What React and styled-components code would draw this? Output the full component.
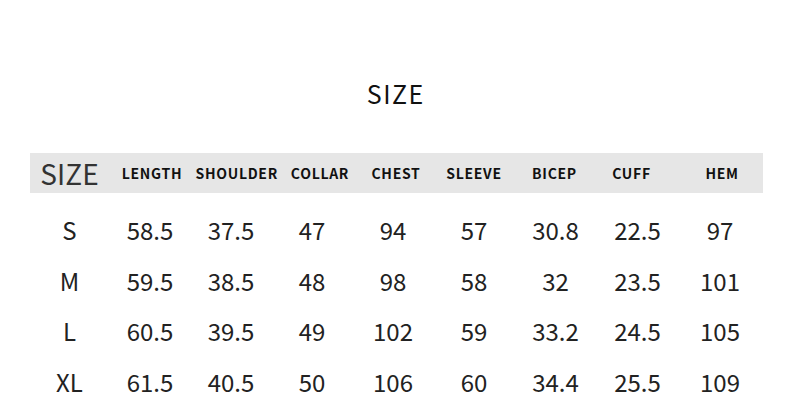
import React from 'react'
import styled, { createGlobalStyle } from 'styled-components'

const columns = ['LENGTH', 'SHOULDER', 'COLLAR', 'CHEST', 'SLEEVE', 'BICEP', 'CUFF', 'HEM']

// small nudges so header labels sit where the original artwork has them
const headShift = [2, 5, 8, 3, 0, -1, -6, 2]

const rows = [
  { size: 'S', values: ['58.5', '37.5', '47', '94', '57', '30.8', '22.5', '97'] },
  { size: 'M', values: ['59.5', '38.5', '48', '98', '58', '32', '23.5', '101'] },
  { size: 'L', values: ['60.5', '39.5', '49', '102', '59', '33.2', '24.5', '105'] },
  { size: 'XL', values: ['61.5', '40.5', '50', '106', '60', '34.4', '25.5', '109'] },
]

const App = () => {
  return (
    <>
      <GlobalStyle />
      <PAGE>
        <TITLE>SIZE</TITLE>
        <TABLE>
          <HEADER_ROW>
            <SIZE_HEAD>SIZE</SIZE_HEAD>
            {columns.map((col, index) => (
              <HEAD_CELL key={col} $shift={headShift[index]}>
                {col}
              </HEAD_CELL>
            ))}
          </HEADER_ROW>
          {rows.map((row) => (
            <DATA_ROW key={row.size}>
              <DATA_CELL>{row.size}</DATA_CELL>
              {row.values.map((value, index) => (
                <DATA_CELL key={index}>{value}</DATA_CELL>
              ))}
            </DATA_ROW>
          ))}
        </TABLE>
      </PAGE>
    </>
  )
}

export default App

const GlobalStyle = createGlobalStyle`
  html, body {
    margin: 0;
    padding: 0;
    background: #ffffff;
  }
  body {
    font-family: "Noto Sans CJK SC", "Noto Sans", sans-serif;
  }
`

const PAGE = styled.div`
  width: 790px;
  height: 409px;
  overflow: hidden;
  display: flex;
  flex-direction: column;
  align-items: center;
  background: #fff;
`

const TITLE = styled.h1`
  margin: 72px 0 0 0;
  height: 42px;
  line-height: 42px;
  font-size: 25px;
  font-weight: 400;
  letter-spacing: 1.5px;
  padding-left: 1.5px;
  color: #111;
`

const TABLE = styled.div`
  margin-top: 39px;
  width: 733px;
  display: flex;
  flex-direction: column;
  margin-left: 2px;
`

const GRID = styled.div`
  display: grid;
  grid-template-columns: 80px repeat(5, 81px) 82px 82px 83px;
  align-items: center;
`

const HEADER_ROW = styled(GRID)`
  height: 40px;
  background: #e6e6e6;
  margin-bottom: 12px;
`

const SIZE_HEAD = styled.div`
  text-align: center;
  font-size: 28px;
  line-height: 40px;
  color: #333;
`

const HEAD_CELL = styled.div`
  text-align: center;
  font-size: 14px;
  font-weight: 700;
  letter-spacing: 0.7px;
  color: #111;
  line-height: 40px;
  white-space: nowrap;
  transform: translateX(${(p) => p.$shift}px);
`

const DATA_ROW = styled(GRID)`
  height: 50.5px;
`

const DATA_CELL = styled.div`
  text-align: center;
  font-size: 24px;
  font-weight: 400;
  color: #222;
  line-height: 50px;
`
